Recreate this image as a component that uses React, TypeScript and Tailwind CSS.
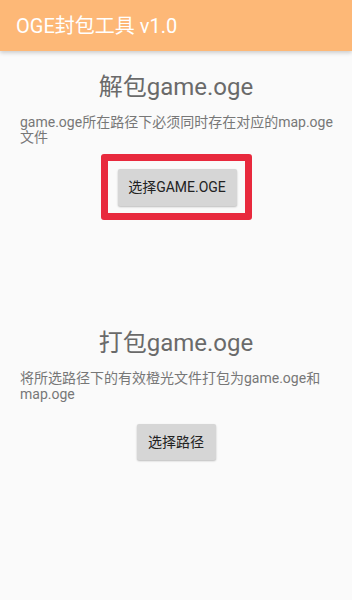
import React from 'react';

const font = { fontFamily: 'Roboto, "Noto Sans CJK SC", sans-serif' };

const App: React.FC = () => {
  return (
    <div className="min-h-[600px] w-[352px] bg-[#fafafa]" style={font}>
      <div className="h-[51px] bg-[#fdb877] flex items-center px-4 shadow-[0_2px_4px_rgba(0,0,0,0.18)]">
        <h1 className="text-[20px] leading-none text-white">OGE封包工具 v1.0</h1>
      </div>

      <div className="flex flex-col items-center pt-[23px]">
        <h2 className="text-[24px] leading-[26px] text-[#6a6a6a]">解包game.oge</h2>
        <p className="self-stretch px-5 mt-[15px] text-[14px] leading-[15px] text-[#777]">
          <span className="block whitespace-nowrap">game.oge所在路径下必须同时存在对应的map.oge</span>
          <span className="block">文件</span>
        </p>
        <div className="mt-[9px] w-[151px] h-[66px] border-[7px] border-[#e8293d] rounded-[3px] flex items-center justify-center">
          <button className="w-[119px] h-[37px] bg-[#d6d6d6] rounded-[2px] shadow-[0_1px_2px_rgba(0,0,0,0.25)] text-[14px] text-[#222] ml-[2px]">
            选择GAME.OGE
          </button>
        </div>

        <h2 className="mt-[110px] text-[24px] leading-[26px] text-[#6a6a6a]">打包game.oge</h2>
        <p className="self-stretch px-5 mt-[14px] text-[14px] leading-[16px] text-[#777]">
          <span className="block whitespace-nowrap">将所选路径下的有效橙光文件打包为game.oge和</span>
          <span className="block">map.oge</span>
        </p>
        <button className="mt-[22px] w-[79px] h-[36px] bg-[#d6d6d6] rounded-[2px] shadow-[0_1px_2px_rgba(0,0,0,0.25)] text-[14px] text-[#222]">
          选择路径
        </button>
      </div>
    </div>
  );
};

export default App;
